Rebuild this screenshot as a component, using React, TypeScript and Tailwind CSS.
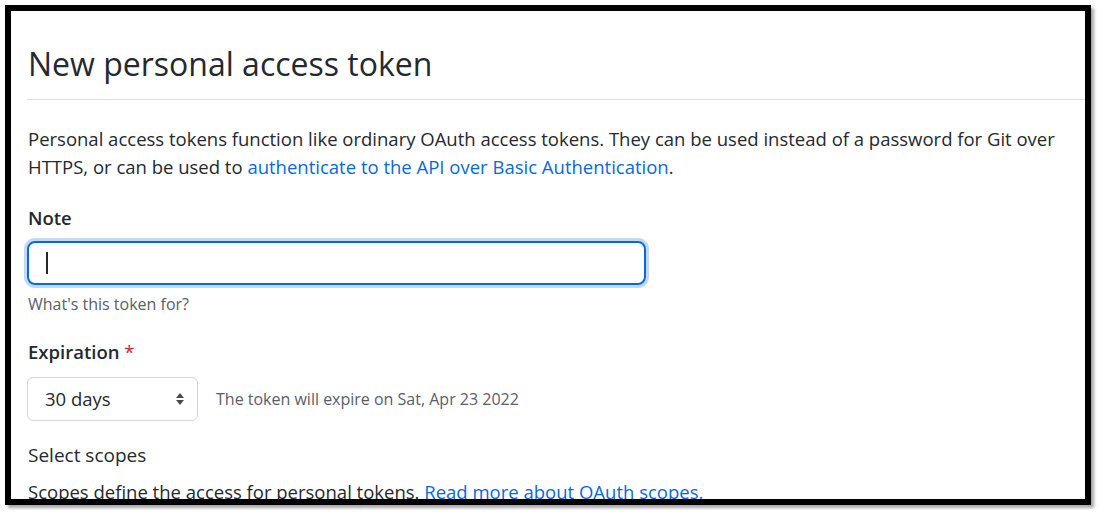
function SortArrows() {
  return (
    <svg width="10" height="14" viewBox="0 0 10 14" className="text-[#424a53]" fill="currentColor">
      <path d="M5 1 L9 6 L1 6 Z" />
      <path d="M5 13 L9 8 L1 8 Z" />
    </svg>
  );
}

export default function App() {
  return (
    <div className="w-[1104px] h-[518px] bg-white pl-[5px] pt-[5px] font-['Open_Sans',sans-serif] text-[#24292f]">
      <div className="w-[1086px] h-[500px] border-[6px] border-black bg-white overflow-hidden shadow-[3px_3px_3px_rgba(0,0,0,0.35)]">
        <div className="pl-4 pt-[33px]">
          <div className="pb-[15px] border-b border-[#d8dee4]">
            <h1 className="text-[32px] leading-[40px] font-normal pl-px">New personal access token</h1>
          </div>

          <p className="mt-[25px] text-[18.5px] leading-[28px] pl-px">
            Personal access tokens function like ordinary OAuth access tokens. They can be used instead of a password for Git over
            HTTPS, or can be used to <span className="text-[#0969da]">authenticate to the API over Basic Authentication</span>.
          </p>

          <label className="block mt-[23px] text-[18.5px] leading-[28px] font-semibold pl-px">Note</label>
          <div className="mt-[9px] w-[619px] h-[44px] rounded-[8px] border-2 border-[#0969da] shadow-[0_0_0_3px_rgba(9,105,218,0.25)] flex items-center pl-[17px]">
            <div className="w-[2px] h-[22px] bg-[#24292f]" />
          </div>
          <p className="mt-[7px] text-[16px] leading-[24px] text-[#57606a] pl-px">What's this token for?</p>

          <label className="block mt-[22px] text-[18.5px] leading-[28px] font-semibold pl-px">
            Expiration <span className="text-[#cf222e] font-normal">*</span>
          </label>
          <div className="mt-[11px] flex items-center gap-[18px]">
            <div className="w-[171px] h-[44px] rounded-[6px] border border-[#d0d7de] flex items-center justify-between pl-[17px] pr-[12px]">
              <span className="text-[18.5px]">30 days</span>
              <SortArrows />
            </div>
            <span className="text-[16px] text-[#57606a]">The token will expire on Sat, Apr 23 2022</span>
          </div>

          <h3 className="mt-[20px] text-[19px] leading-[28px] font-normal pl-px">Select scopes</h3>
          <p className="mt-[9px] text-[18.5px] leading-[28px] pl-px">
            Scopes define the access for personal tokens. <span className="text-[#0969da]">Read more about OAuth scopes.</span>
          </p>
        </div>
      </div>
    </div>
  );
}
